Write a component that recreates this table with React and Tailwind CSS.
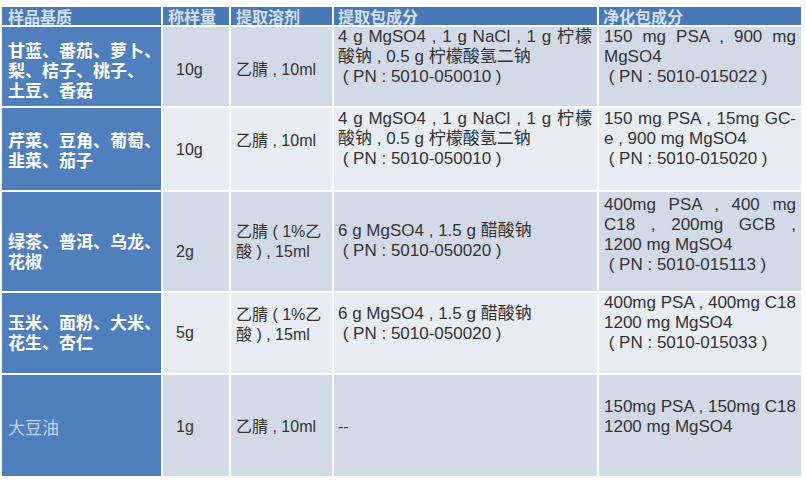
import React from "react";

const txt = "[font-family:'Liberation_Sans','Noto_Sans_CJK_SC',sans-serif]";
const cjk = "[font-family:'Noto_Sans_CJK_SC',sans-serif]";

function J({ children }) {
  return <div className="text-justify [text-align-last:justify]">{children}</div>;
}
function L({ children }) {
  return <div className="whitespace-pre">{children}</div>;
}

function Side({ pt, children, light }) {
  return (
    <div
      className={`bg-[#4f7fbd] pl-[6px] text-[17px] leading-[20px] whitespace-nowrap ${cjk} ${
        light ? "text-[#c4d4ea] font-normal" : "text-white font-bold"
      } ${pt}`}
    >
      {children}
    </div>
  );
}

function C({ bg, pt, pl, size = "text-[16px]", children }) {
  return (
    <div className={`${bg} ${pt} ${pl} pr-[5px] ${size} leading-[20px] text-[#333] ${txt}`}>
      {children}
    </div>
  );
}

function H({ children, pl }) {
  return (
    <div
      className={`bg-[#4a79b8] ${pl} text-[16px] leading-[18px] font-bold text-[#d6e0ed] whitespace-nowrap ${cjk}`}
    >
      {children}
    </div>
  );
}

export default function App() {
  const d = "bg-[#d3dae7]";
  const l = "bg-[#e8ecf3]";
  return (
    <div className="w-[806px] h-[480px] bg-white overflow-hidden pt-[7px] pl-[2px]">
      <div className="grid grid-cols-[159px_66px_101px_263px_202px] grid-rows-[18px_79px_82px_99px_80px_101px] gap-[2px] bg-white">
        <H pl="pl-[6px]">样品基质</H>
        <H pl="pl-[5px]">称样量</H>
        <H pl="pl-[5px]">提取溶剂</H>
        <H pl="pl-[4px]">提取包成分</H>
        <H pl="pl-[4px]">净化包成分</H>

        {/* Row 1 */}
        <Side pt="pt-[13px]">
          甘蓝、番茄、萝卜、
          <br />
          梨、桔子、桃子、
          <br />
          土豆、香菇
        </Side>
        <C bg={d} pt="pt-[33px]" pl="pl-[13px]">
          <L>10g</L>
        </C>
        <C bg={d} pt="pt-[33px]" pl="pl-[5px]">
          <L>乙腈 , 10ml</L>
        </C>
        <C bg={d} pt="pt-0" pl="pl-[4px]" size="text-[17px]">
          <J>4 g MgSO4 , 1 g NaCl , 1 g 柠檬</J>
          <L>酸钠 , 0.5 g 柠檬酸氢二钠</L>
          <L> ( PN : 5010-050010 )</L>
        </C>
        <C bg={d} pt="pt-0" pl="pl-[5px]" size="text-[17px]">
          <J>150 mg PSA , 900 mg</J>
          <L>MgSO4</L>
          <L> ( PN : 5010-015022 )</L>
        </C>

        {/* Row 2 */}
        <Side pt="pt-[22px]">
          芹菜、豆角、葡萄、
          <br />
          韭菜、茄子
        </Side>
        <C bg={l} pt="pt-[32px]" pl="pl-[13px]">
          <L>10g</L>
        </C>
        <C bg={l} pt="pt-[23px]" pl="pl-[5px]">
          <L>乙腈 , 10ml</L>
        </C>
        <C bg={l} pt="pt-[1px]" pl="pl-[4px]" size="text-[17px]">
          <J>4 g MgSO4 , 1 g NaCl , 1 g 柠檬</J>
          <L>酸钠 , 0.5 g 柠檬酸氢二钠</L>
          <L> ( PN : 5010-050010 )</L>
        </C>
        <C bg={l} pt="pt-[1px]" pl="pl-[5px]" size="text-[17px]">
          <J>150 mg PSA , 15mg GC-</J>
          <L>e , 900 mg MgSO4</L>
          <L> ( PN : 5010-015020 )</L>
        </C>

        {/* Row 3 */}
        <Side pt="pt-[39px]">
          绿茶、普洱、乌龙、
          <br />
          花椒
        </Side>
        <C bg={d} pt="pt-[50px]" pl="pl-[13px]">
          <L>2g</L>
        </C>
        <C bg={d} pt="pt-[30px]" pl="pl-[5px]">
          <L>乙腈 ( 1%乙</L>
          <L>酸 ) , 15ml</L>
        </C>
        <C bg={d} pt="pt-[29px]" pl="pl-[4px]" size="text-[17px]">
          <L>6 g MgSO4 , 1.5 g 醋酸钠</L>
          <L> ( PN : 5010-050020 )</L>
        </C>
        <C bg={d} pt="pt-[3px]" pl="pl-[5px]" size="text-[17px]">
          <J>400mg PSA , 400 mg</J>
          <J>C18 , 200mg GCB ,</J>
          <L>1200 mg MgSO4</L>
          <L> ( PN : 5010-015113 )</L>
        </C>

        {/* Row 4 */}
        <Side pt="pt-[19px]">
          玉米、面粉、大米、
          <br />
          花生、杏仁
        </Side>
        <C bg={l} pt="pt-[30px]" pl="pl-[13px]">
          <L>5g</L>
        </C>
        <C bg={l} pt="pt-[12px]" pl="pl-[5px]">
          <L>乙腈 ( 1%乙</L>
          <L>酸 ) , 15ml</L>
        </C>
        <C bg={l} pt="pt-[11px]" pl="pl-[4px]" size="text-[17px]">
          <L>6 g MgSO4 , 1.5 g 醋酸钠</L>
          <L> ( PN : 5010-050020 )</L>
        </C>
        <C bg={l} pt="pt-0" pl="pl-[5px]" size="text-[17px]">
          <L>400mg PSA , 400mg C18</L>
          <L>1200 mg MgSO4</L>
          <L> ( PN : 5010-015033 )</L>
        </C>

        {/* Row 5 */}
        <Side pt="pt-[42px]" light>
          大豆油
        </Side>
        <C bg={d} pt="pt-[42px]" pl="pl-[13px]">
          <L>1g</L>
        </C>
        <C bg={d} pt="pt-[42px]" pl="pl-[5px]">
          <L>乙腈 , 10ml</L>
        </C>
        <C bg={d} pt="pt-[42px]" pl="pl-[4px]">
          <L>--</L>
        </C>
        <C bg={d} pt="pt-[22px]" pl="pl-[5px]" size="text-[17px]">
          <L>150mg PSA , 150mg C18</L>
          <L>1200 mg MgSO4</L>
        </C>
      </div>
    </div>
  );
}
